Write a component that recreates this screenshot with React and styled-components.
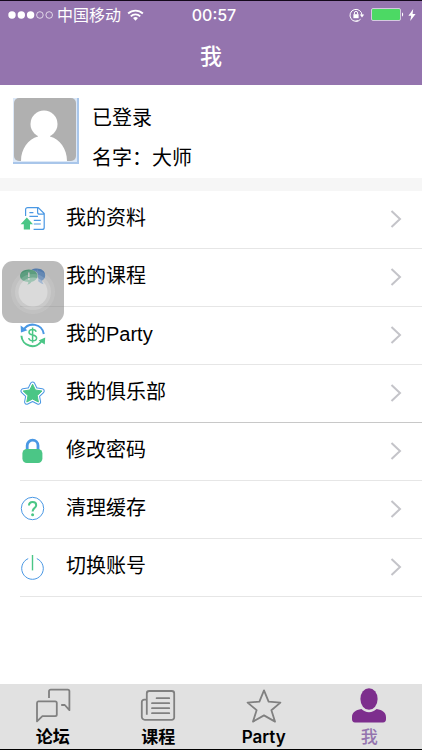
import React, { useState } from 'react';
import styled, { createGlobalStyle } from 'styled-components';

const GlobalStyle = createGlobalStyle`
  * {
    box-sizing: border-box;
  }
  body {
    margin: 0;
    background: #ffffff;
    color: #000000;
    font-family: Inter, 'Noto Sans CJK SC', sans-serif;
  }
`;

const BLUE = '#4a98e4';
const GREEN = '#4bc686';

function DocIcon() {
  return (
    <svg width='26' height='26' viewBox='0 0 26 26' fill='none'>
      <path
        d='M5.6 10V3.6a2 2 0 0 1 2-2h10.6l6 6v13.8a2 2 0 0 1-2 2H13.6M17.6 1.8v4.4a2 2 0 0 0 2 2h4.4M9.4 6.6h4M9.4 10.4h8.6M13.8 14.4h7M13.8 18h7'
        stroke={BLUE}
        strokeWidth='1.2'
      />
      <path d='M6.8 11.6l6.2 6.6H10v5.4H3.8v-5.4H.6z' fill={GREEN} />
    </svg>
  );
}

function ChatIcon() {
  return (
    <svg width='26' height='26' viewBox='0 1 26 26'>
      <path
        d='M17 5.6c4.6 0 8.2 2.8 8.2 6.6 0 2.4-1.2 4.2-3.2 5.4.2 1.6.8 2.6 1.6 3.6-2.4-.4-4-1.6-5-3z'
        fill='#2f7fe0'
      />
      <path
        d='M17 5.600c-2.400 0-4.200.4-5.600 1.400 4.600 1 7.800 3.400 7.800 7.200 0 1.600-.4 3-1.400 4.200l2.200-.4z'
        fill='#2f7fe0'
      />
      <path
        d='M8.800 6.400c5 0 8.800 2.800 8.800 6.400 0 3-2.400 5.200-6 6-1 1.600-2.400 2.600-4.400 3 .8-1 1.200-1.800 1.200-2.800C3.600 18.800 0 16.400 0 12.800s3.800-6.400 8.800-6.400z'
        fill='#1fae6c'
      />
      <path d='M8.800 9.400v4.600M8.800 15.200v1.600' stroke='#ffffff' strokeWidth='1.600' />
    </svg>
  );
}

function MoneyIcon() {
  return (
    <svg width='26' height='26' viewBox='0 0 26 26' fill='none'>
      <path d='M3.400 8.200A11 11 0 0 1 23.800 12' stroke={BLUE} strokeWidth='2' />
      <path d='M.6 3.600l.4 7 6.400-2.400z' fill={BLUE} />
      <path d='M1.400 13.800a11 11 0 0 0 20.400 5' stroke={GREEN} strokeWidth='2' />
      <path d='M25.200 15.400l-.4 7-6.200-4z' fill={GREEN} />
      <path
        d='M16.200 9.800c-.4-1.600-1.800-2.400-3.600-2.400-2 0-3.600 1-3.600 2.800 0 4 7.600 1.800 7.600 5.800 0 1.800-1.600 2.800-3.800 2.800s-3.800-1-4-2.800M12.600 5.400v15.400'
        stroke={GREEN}
        strokeWidth='1.500'
      />
    </svg>
  );
}

function ClubIcon() {
  return (
    <svg width='26' height='26' viewBox='0 0 26 26' strokeLinejoin='round'>
      <path
        d='M12.600 4.200l2.800 5.800 6.600 1-4.800 4.600 1.200 6.400-5.800-3-5.800 3 1.200-6.400-4.800-4.600 6.600-1z'
        fill={BLUE}
        stroke={BLUE}
        strokeWidth='5.400'
      />
      <path
        d='M12.600 4.200l2.800 5.800 6.600 1-4.800 4.600 1.200 6.400-5.800-3-5.800 3 1.200-6.400-4.800-4.600 6.600-1z'
        fill='#ffffff'
        stroke='#ffffff'
        strokeWidth='3.400'
      />
      <path
        d='M12.600 4.200l2.800 5.800 6.600 1-4.800 4.600 1.200 6.400-5.800-3-5.800 3 1.200-6.400-4.800-4.600 6.600-1z'
        fill={GREEN}
        stroke={GREEN}
      />
    </svg>
  );
}

function LockIcon() {
  return (
    <svg width='26' height='26' viewBox='0 0 26 26' fill='none'>
      <path
        d='M7.200 13V7.600a5.400 5.400 0 0 1 10.800 0V13'
        stroke={BLUE}
        strokeWidth='2.800'
      />
      <rect x='2.400' y='11' width='20' height='14' rx='4.400' fill={GREEN} />
    </svg>
  );
}

function HelpIcon() {
  return (
    <svg width='26' height='26' viewBox='0 1 26 26' fill='none'>
      <circle cx='12.500' cy='13.500' r='11.200' stroke={BLUE} />
      <path
        d='M9 10.600c0-2.200 1.400-3.600 3.600-3.600s3.600 1.400 3.600 3.200c0 2.800-3.600 3-3.600 6.400'
        stroke={GREEN}
        strokeWidth='2'
      />
      <circle cx='12.600' cy='19.800' r='1.500' fill={GREEN} />
    </svg>
  );
}

function PowerIcon() {
  return (
    <svg width='26' height='26' viewBox='0 0 26 26' fill='none'>
      <path d='M8.200 4.600a10.800 10.800 0 1 0 8.600 0' stroke={BLUE} />
      <path d='M12.500 1v15.400' stroke={GREEN} strokeWidth='1.400' />
    </svg>
  );
}

function ForumIcon() {
  return (
    <svg width='36' height='36' viewBox='0 0 36 36' fill='none' stroke='#808080' strokeWidth='1.800' strokeLinejoin='round'>
      <path d='M3.200 13.400h17a1.600 1.600 0 0 1 1.600 1.600v11.600a1.600 1.600 0 0 1-1.600 1.600H7.400L2 33.400V15a1.600 1.600 0 0 1 1.200-1.600z' />
      <path d='M14 10V3.200a1.600 1.600 0 0 1 1.600-1.600h17.200a1.600 1.600 0 0 1 1.600 1.600v19l-4.600-5.200h-3.600' />
    </svg>
  );
}

function CourseIcon() {
  return (
    <svg width='36' height='36' viewBox='0 0 36 36' fill='none' stroke='#808080' strokeWidth='1.800'>
      <path d='M6.800 26.800V5.400a2.400 2.400 0 0 1 2.400-2.400h22.600a2.400 2.400 0 0 1 2.400 2.400v24a2.400 2.400 0 0 1-2.400 2.400H4.800A3 3 0 0 1 1.800 28.800V14a2.400 2.400 0 0 1 2.400-2.400h2.600' />
      <path d='M16.600 10.200h12.600M12 15.200h17.200M12 20.200h17.200M12 25.200h17.200' strokeLinecap='round' />
    </svg>
  );
}

function PartyIcon() {
  return (
    <svg width='36' height='36' viewBox='0 0 36 36' fill='none' stroke='#808080' strokeWidth='1.800' strokeLinejoin='round'>
      <path d='M18 2.400l4.600 11.200 11.800 1-9 7.600 3.600 11.400L18 27.400 7 33.600l3.600-11.400-9-7.600 11.800-1z' />
    </svg>
  );
}

function MeIcon() {
  return (
    <svg width='36' height='36' viewBox='0 0 36 36' fill='#7d2e8d'>
      <ellipse cx='18' cy='11' rx='8.600' ry='10.800' />
      <path d='M1 29.200c0-4.800 3.600-7 9.400-8.200 2 2 4.600 3.200 7.600 3.200s5.600-1.200 7.600-3.200c5.800 1.200 9.400 3.400 9.400 8.200v2c0 2-1 3.200-3 3.200H4c-2 0-3-1.200-3-3.200z' />
    </svg>
  );
}

const menus = [
  { name: '我的资料', icon: DocIcon },
  { name: '我的课程', icon: ChatIcon },
  { name: '我的Party', icon: MoneyIcon },
  { name: '我的俱乐部', icon: ClubIcon, dark: true },
  { name: '修改密码', icon: LockIcon },
  { name: '清理缓存', icon: HelpIcon },
  { name: '切换账号', icon: PowerIcon },
];

const tabs = [
  { name: '论坛', icon: ForumIcon },
  { name: '课程', icon: CourseIcon },
  { name: 'Party', icon: PartyIcon },
  { name: '我', icon: MeIcon },
];

function StatusBar() {
  return (
    <RootStatus>
      <StatusSide>
        <svg width='46' height='10' viewBox='0 0 46 10' fill='#ffffff'>
          <circle cx='4' cy='5' r='3.700' />
          <circle cx='13.300' cy='5' r='3.700' />
          <circle cx='22.600' cy='5' r='3.700' />
          <circle cx='31.900' cy='5' r='3.300' fill='none' stroke='#ffffff' strokeWidth='.7' />
          <circle cx='41.200' cy='5' r='3.300' fill='none' stroke='#ffffff' strokeWidth='.7' />
        </svg>
        <Carrier>中国移动</Carrier>
        <svg width='17' height='12' viewBox='0 0 18 12' fill='none' stroke='#ffffff' strokeWidth='2'>
          <path d='M1.200 4.400a11.400 11.400 0 0 1 15.600 0M4 7.400a7.200 7.200 0 0 1 10 0' />
          <path d='M9 12l-2.600-2.700a3.800 3.800 0 0 1 5.200 0z' fill='#ffffff' stroke='none' />
        </svg>
      </StatusSide>
      <Time>00:57</Time>
      <StatusSide $end>
        <svg width='16' height='14' viewBox='0 0 16 14' fill='none' stroke='#ffffff'>
          <path d='M11.600 11.200A6 6 0 1 1 13 7.400M9.400 12.600a6 6 0 0 1-3 .4' />
          <path d='M10.800 6.600h4.400L13 9.400z' fill='#ffffff' stroke='none' />
          <rect x='4.400' y='6.200' width='5.200' height='4' fill='#ffffff' stroke='none' />
          <path d='M5.400 6.400V5a1.600 1.600 0 0 1 3.200 0v1.400' />
        </svg>
        <Battery>
          <svg width='33' height='13' viewBox='0 0 33 13'>
            <rect x='.5' y='.5' width='29' height='12' rx='1.500' fill='#4cd964' stroke='#d5c9e0' />
            <path d='M31 4.500c1.500.4 1.500 3.600 0 4z' fill='#ffffff' />
          </svg>
          <svg width='8' height='12' viewBox='0 0 8 12' fill='#ffffff'>
            <path d='M5.200 0L.4 6.800h2.800L2.200 12l5.400-7H4.600z' />
          </svg>
        </Battery>
      </StatusSide>
    </RootStatus>
  );
}

function App() {
  const [current, setCurrent] = useState('我');

  return (
    <Page>
      <GlobalStyle />
      <Header>
        <StatusBar />
        <Title>我</Title>
      </Header>
      <Profile>
        <svg width='66' height='66' viewBox='0 0 66 66'>
          <rect width='66' height='66' fill='#a9c6ea' />
          <rect width='64' height='64' fill='#dce8f7' />
          <rect x='1' width='62' height='63' rx='5' fill='#b0b0b0' />
          <circle cx='31' cy='26' r='13.500' fill='#ffffff' />
          <path d='M8 63c0-12 7-22 17-24.500V36h12v2.500C47 41 54 51 54 63z' fill='#ffffff' />
        </svg>
        <ProfileInfo>
          <ProfileText>已登录</ProfileText>
          <ProfileText>名字：大师</ProfileText>
        </ProfileInfo>
      </Profile>
      <MenuList>
        {menus.map((menu) => (
          <MenuItem key={menu.name}>
            <MenuButton type='button' $dark={menu.dark}>
              <menu.icon />
              <MenuName>{menu.name}</MenuName>
              <svg width='12' height='18' viewBox='0 0 12 18' fill='none'>
                <path d='M1.500 1l8.500 8-8.500 8' stroke='#c4c4c9' strokeWidth='2' />
              </svg>
            </MenuButton>
          </MenuItem>
        ))}
      </MenuList>
      <TabBar>
        {tabs.map((tab) => (
          <TabButton
            key={tab.name}
            type='button'
            $active={tab.name === current}
            onClick={() => setCurrent(tab.name)}
          >
            <tab.icon />
            {tab.name}
          </TabButton>
        ))}
      </TabBar>
      <TouchButton type='button' aria-label='AssistiveTouch'>
        <svg width='46' height='46' viewBox='0 0 46 46' fill='#ffffff'>
          <circle cx='23' cy='23' r='22' fillOpacity='.1' />
          <circle cx='23' cy='23' r='18' fillOpacity='.15' />
          <circle cx='23' cy='23' r='14.500' fillOpacity='.3' />
        </svg>
      </TouchButton>
    </Page>
  );
}

export default App;

const Page = styled.div`
  display: flex;
  flex-direction: column;
  min-height: 100vh;
  border-top: 1px solid #14081c;
  border-bottom: 1px solid #000000;
`;

const Header = styled.header`
  background: #9474ae;
  color: #ffffff;
`;

const RootStatus = styled.div`
  display: grid;
  grid-template-columns: 1fr auto 1fr;
  align-items: center;
  height: 27px;
  padding: 0 6px 0 8px;
`;

const StatusSide = styled.div`
  display: flex;
  align-items: center;
  justify-content: ${(props) => (props.$end ? 'flex-end' : 'flex-start')};
  gap: ${(props) => (props.$end ? '6px' : '3px')};
`;

const Battery = styled.div`
  display: flex;
  align-items: center;
  gap: 4px;
`;

const Carrier = styled.span`
  margin-right: 3px;
  font-size: 16px;
  line-height: 26px;
`;

const Time = styled.span`
  padding-left: 4px;
  font-size: 16px;
  font-weight: 500;
`;

const Title = styled.h1`
  margin: 0;
  height: 57px;
  font-size: 22px;
  font-weight: 500;
  line-height: 57px;
  text-align: center;
`;

const Profile = styled.section`
  display: flex;
  align-items: flex-start;
  gap: 13px;
  padding: 13px 13px 0;
  border-bottom: 13px solid #f6f6f6;
`;

const ProfileInfo = styled.div`
  display: flex;
  flex-direction: column;
`;

const ProfileText = styled.p`
  margin: 0;
  font-size: 20px;
  line-height: 40px;
`;

const MenuList = styled.ul`
  flex: 1;
  margin: 0;
  padding: 0 0 0 20px;
  list-style: none;
`;

const MenuItem = styled.li`
  display: flex;
`;

const MenuButton = styled.button`
  display: flex;
  align-items: center;
  width: 100%;
  height: 58px;
  padding: 0 20px 2px 0;
  border: none;
  border-bottom: 1px solid ${(props) => (props.$dark ? '#c8c8c8' : '#e6e6e6')};
  background: none;
  color: inherit;
  font-family: 'Liberation Sans', 'Noto Sans CJK SC', sans-serif;
  font-size: 20px;
  text-align: left;
`;

const MenuName = styled.span`
  flex: 1;
  margin-left: 20px;
  padding-bottom: 2px;
  line-height: 28px;
`;

const TabBar = styled.nav`
  display: grid;
  grid-template-columns: repeat(4, 1fr);
  height: 65px;
  background: #e1e1e1;
`;

const TabButton = styled.button`
  display: flex;
  flex-direction: column;
  align-items: center;
  padding: 4px 0 0;
  border: none;
  background: none;
  color: ${(props) => (props.$active ? '#9474ae' : '#000000')};
  font-family: inherit;
  font-size: 17px;
  font-weight: ${(props) => (props.$active ? 500 : 600)};
  line-height: 26px;
`;

const TouchButton = styled.button`
  position: fixed;
  top: 261px;
  left: 2px;
  display: flex;
  align-items: center;
  justify-content: center;
  width: 62px;
  height: 62px;
  padding: 0;
  border: none;
  border-radius: 11px;
  background: rgba(120, 120, 120, 0.5);
`;
